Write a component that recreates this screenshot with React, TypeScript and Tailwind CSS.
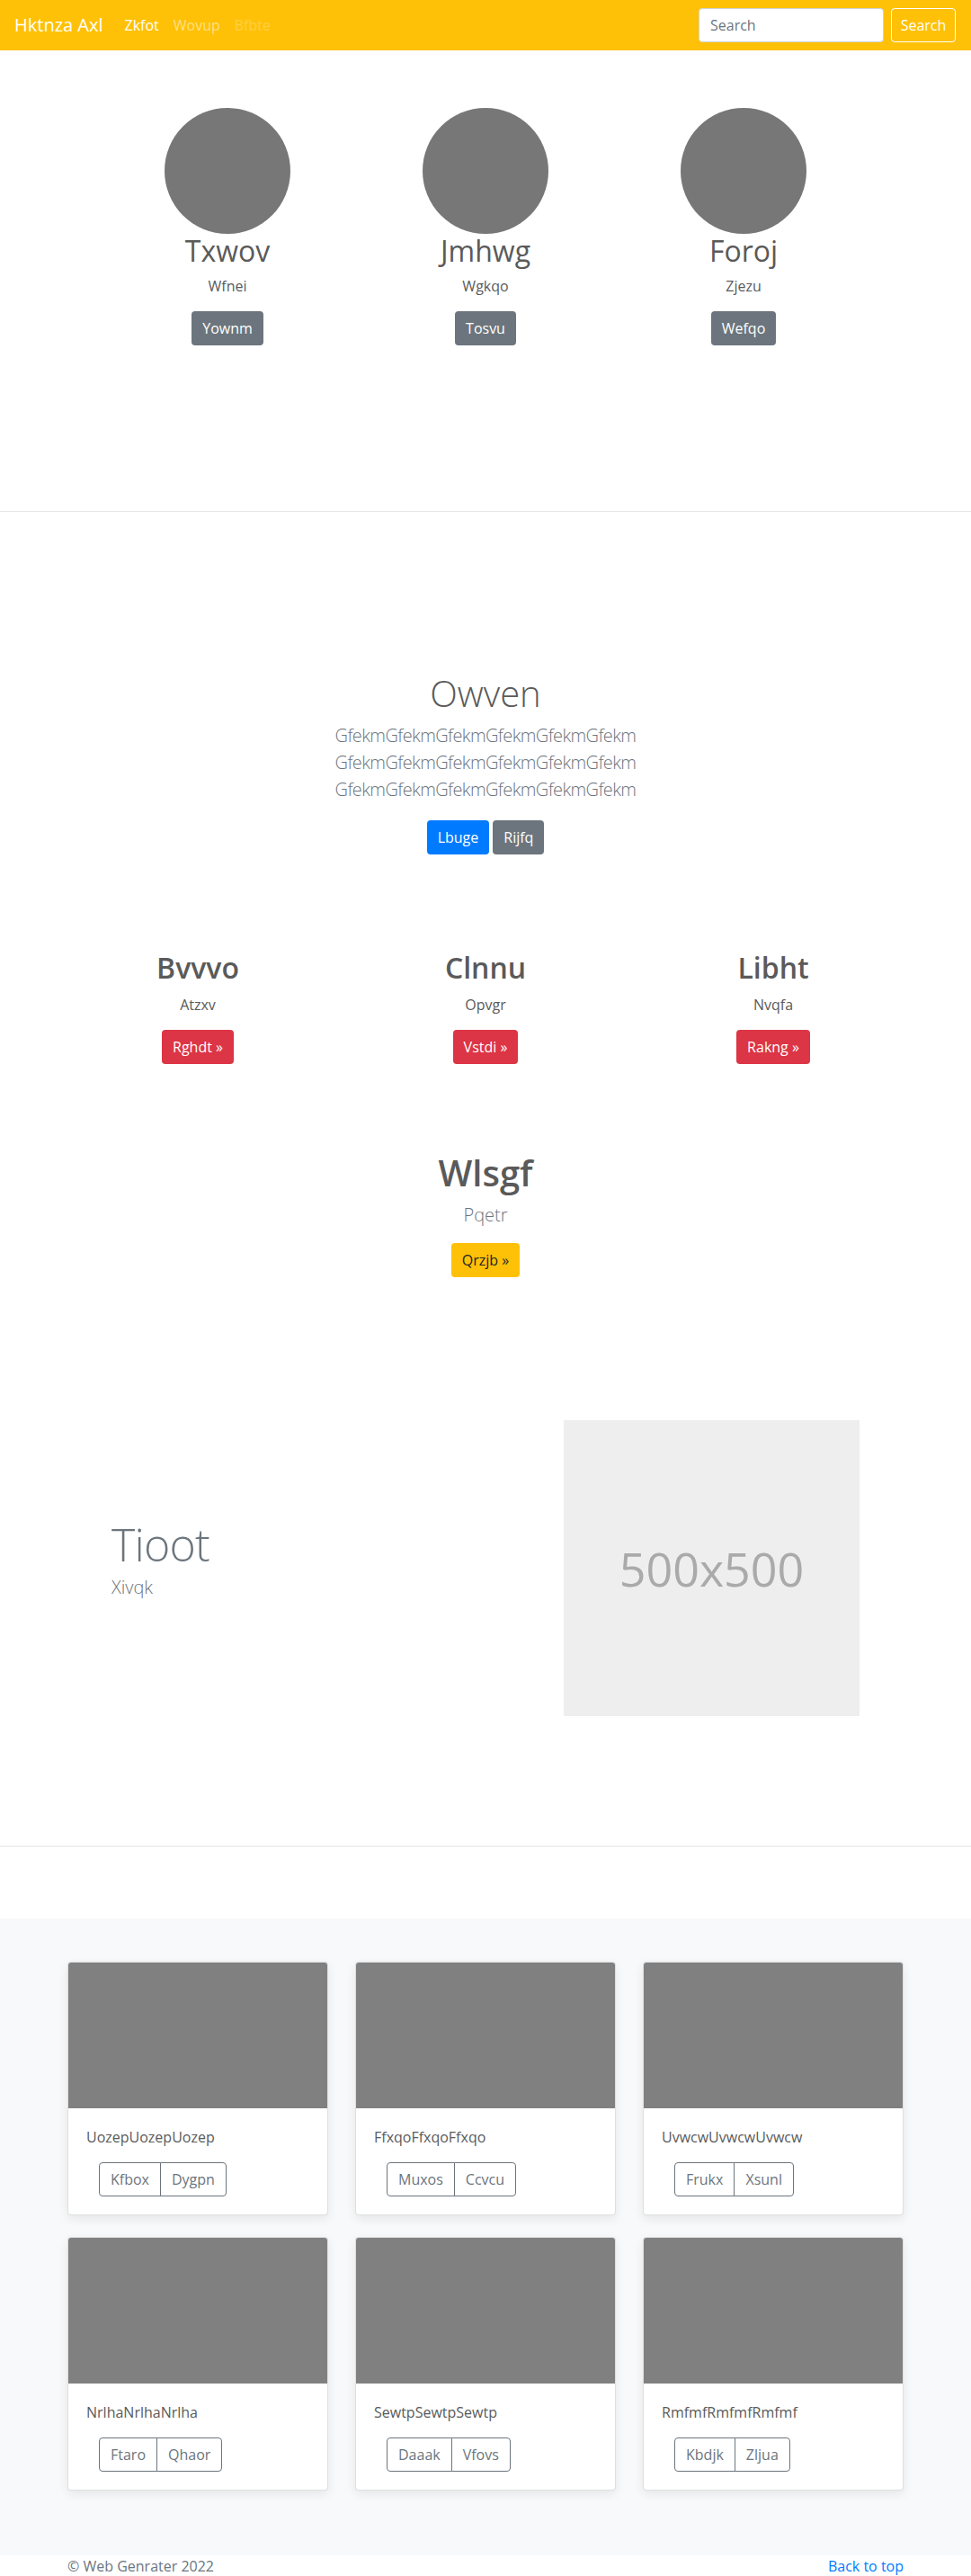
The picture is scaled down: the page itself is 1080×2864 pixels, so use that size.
import React from "react";

const TEAM = [
  { name: "Txwov", role: "Wfnei", cta: "Yownm" },
  { name: "Jmhwg", role: "Wgkqo", cta: "Tosvu" },
  { name: "Foroj", role: "Zjezu", cta: "Wefqo" },
];

const FEATURES = [
  { title: "Bvvvo", sub: "Atzxv", cta: "Rghdt »" },
  { title: "Clnnu", sub: "Opvgr", cta: "Vstdi »" },
  { title: "Libht", sub: "Nvqfa", cta: "Rakng »" },
];

const CARDS = [
  { text: "UozepUozepUozep", a: "Kfbox", b: "Dygpn" },
  { text: "FfxqoFfxqoFfxqo", a: "Muxos", b: "Ccvcu" },
  { text: "UvwcwUvwcwUvwcw", a: "Frukx", b: "Xsunl" },
  { text: "NrlhaNrlhaNrlha", a: "Ftaro", b: "Qhaor" },
  { text: "SewtpSewtpSewtp", a: "Daaak", b: "Vfovs" },
  { text: "RmfmfRmfmfRmfmf", a: "Kbdjk", b: "Zljua" },
];

function Navbar() {
  return (
    <nav className="flex h-14 items-center bg-[#ffc107] pl-4 pr-[17px]">
      <span className="mr-4 text-xl leading-[30px] text-white">Hktnza Axl</span>
      <a className="px-2 leading-6 text-white">Zkfot</a>
      <a className="px-2 leading-6 text-white/50">Wovup</a>
      <a className="px-2 leading-6 text-white/25">Bfbte</a>
      <form className="ml-auto flex items-center" onSubmit={(e) => e.preventDefault()}>
        <input
          placeholder="Search"
          className="mr-2 h-[38px] w-[206px] rounded border border-[#ced4da] bg-white px-3 text-base text-[#495057] placeholder:text-[#6c757d] focus:outline-none"
        />
        <button className="h-[38px] w-[72px] rounded border border-white text-white">Search</button>
      </form>
    </nav>
  );
}

function Team() {
  return (
    <section className="pt-16">
      <div className="mx-auto grid w-[861px] grid-cols-3 text-center">
        {TEAM.map((m) => (
          <div key={m.name} className="flex flex-col items-center">
            <div className="h-[140px] w-[140px] rounded-full bg-[#777]" />
            <h2 className="mb-2 text-[32px] leading-[38px]">{m.name}</h2>
            <p className="mb-4 leading-6">{m.role}</p>
            <button className="h-[38px] rounded bg-[#6c757d] px-3 text-white">{m.cta}</button>
          </div>
        ))}
      </div>
    </section>
  );
}

function Jumbo() {
  return (
    <section className="pt-[178px] text-center">
      <h1 className="mb-2 text-[40px] font-light leading-[48px]">Owven</h1>
      <div className="mb-4 text-xl font-light leading-[30px] tracking-[-0.6px] text-[#6c757d]">
        <div>GfekmGfekmGfekmGfekmGfekmGfekm</div>
        <div>GfekmGfekmGfekmGfekmGfekmGfekm</div>
        <div>GfekmGfekmGfekmGfekmGfekmGfekm</div>
      </div>
      <div className="mt-[19px] flex justify-center gap-1">
        <button className="h-[38px] rounded bg-[#007bff] px-3 text-white">Lbuge</button>
        <button className="h-[38px] rounded bg-[#6c757d] px-3 text-white">Rijfq</button>
      </div>
    </section>
  );
}

function Features() {
  return (
    <section className="pt-[107px] text-center">
      <div className="mx-auto grid w-[960px] grid-cols-3">
        {FEATURES.map((f) => (
          <div key={f.title} className="flex flex-col items-center">
            <h2 className="mb-[10px] text-[32px] font-semibold leading-[38px]">{f.title}</h2>
            <p className="mb-4 leading-6">{f.sub}</p>
            <button className="h-[38px] rounded bg-[#dc3545] px-3 text-white">{f.cta}</button>
          </div>
        ))}
      </div>

      <div className="mt-[97px] flex flex-col items-center">
        <h1 className="mb-2 text-[40px] font-semibold leading-[48px]">Wlsgf</h1>
        <p className="mb-4 text-xl font-light leading-[30px] text-[#6c757d]">Pqetr</p>
        <button className="h-[38px] rounded bg-[#ffc107] px-3 text-[#212529]">Qrzjb »</button>
      </div>
    </section>
  );
}

function Featurette() {
  return (
    <section className="mx-auto mt-[159px] flex w-[960px] items-center">
      <div className="flex-1 pl-16">
        <h2 className="mb-2 text-[50px] font-light leading-none tracking-[-0.8px] text-[#6c757d]">Tioot</h2>
        <p className="mb-4 text-xl font-light leading-[30px] text-[#6c757d]">Xivqk</p>
      </div>
      <div className="mr-16 flex h-[329px] w-[329px] items-center justify-center bg-[#eee] text-[52px] text-[#aaa]">
        500x500
      </div>
    </section>
  );
}

function Album() {
  return (
    <section className="mt-20 bg-[#f8f9fa] pb-[72px] pt-12">
      <div className="mx-auto grid w-[960px] grid-cols-3 gap-x-[30px] gap-y-6 px-[15px]">
        {CARDS.map((c) => (
          <div
            key={c.text}
            className="overflow-hidden rounded border border-black/[0.125] bg-white shadow-[0_4px_12px_rgba(0,0,0,0.08)]"
          >
            <div className="h-[162px] bg-[#808080]" />
            <div className="p-5">
              <p className="mb-4 leading-6">{c.text}</p>
              <div className="ml-[14px] inline-flex">
                <button className="h-[38px] rounded-l border border-[#6c757d] px-3 text-[#6c757d]">{c.a}</button>
                <button className="-ml-px h-[38px] rounded-r border border-[#6c757d] px-3 text-[#6c757d]">{c.b}</button>
              </div>
            </div>
          </div>
        ))}
      </div>
    </section>
  );
}

export default function App() {
  return (
    <div className="min-h-screen bg-white font-['Open_Sans',sans-serif] text-base text-[#5a5a5a]">
      <Navbar />
      <Team />
      <hr className="mt-[184px] border-t border-[#e5e5e5]" />
      <Jumbo />
      <Features />
      <Featurette />
      <hr className="mt-[144px] border-t border-[#e5e5e5]" />
      <Album />
      <footer className="mx-auto flex w-[960px] justify-between px-[15px] leading-6 text-[#6c757d]">
        <p>© Web Genrater 2022</p>
        <a className="text-[#007bff]">Back to top</a>
      </footer>
    </div>
  );
}
